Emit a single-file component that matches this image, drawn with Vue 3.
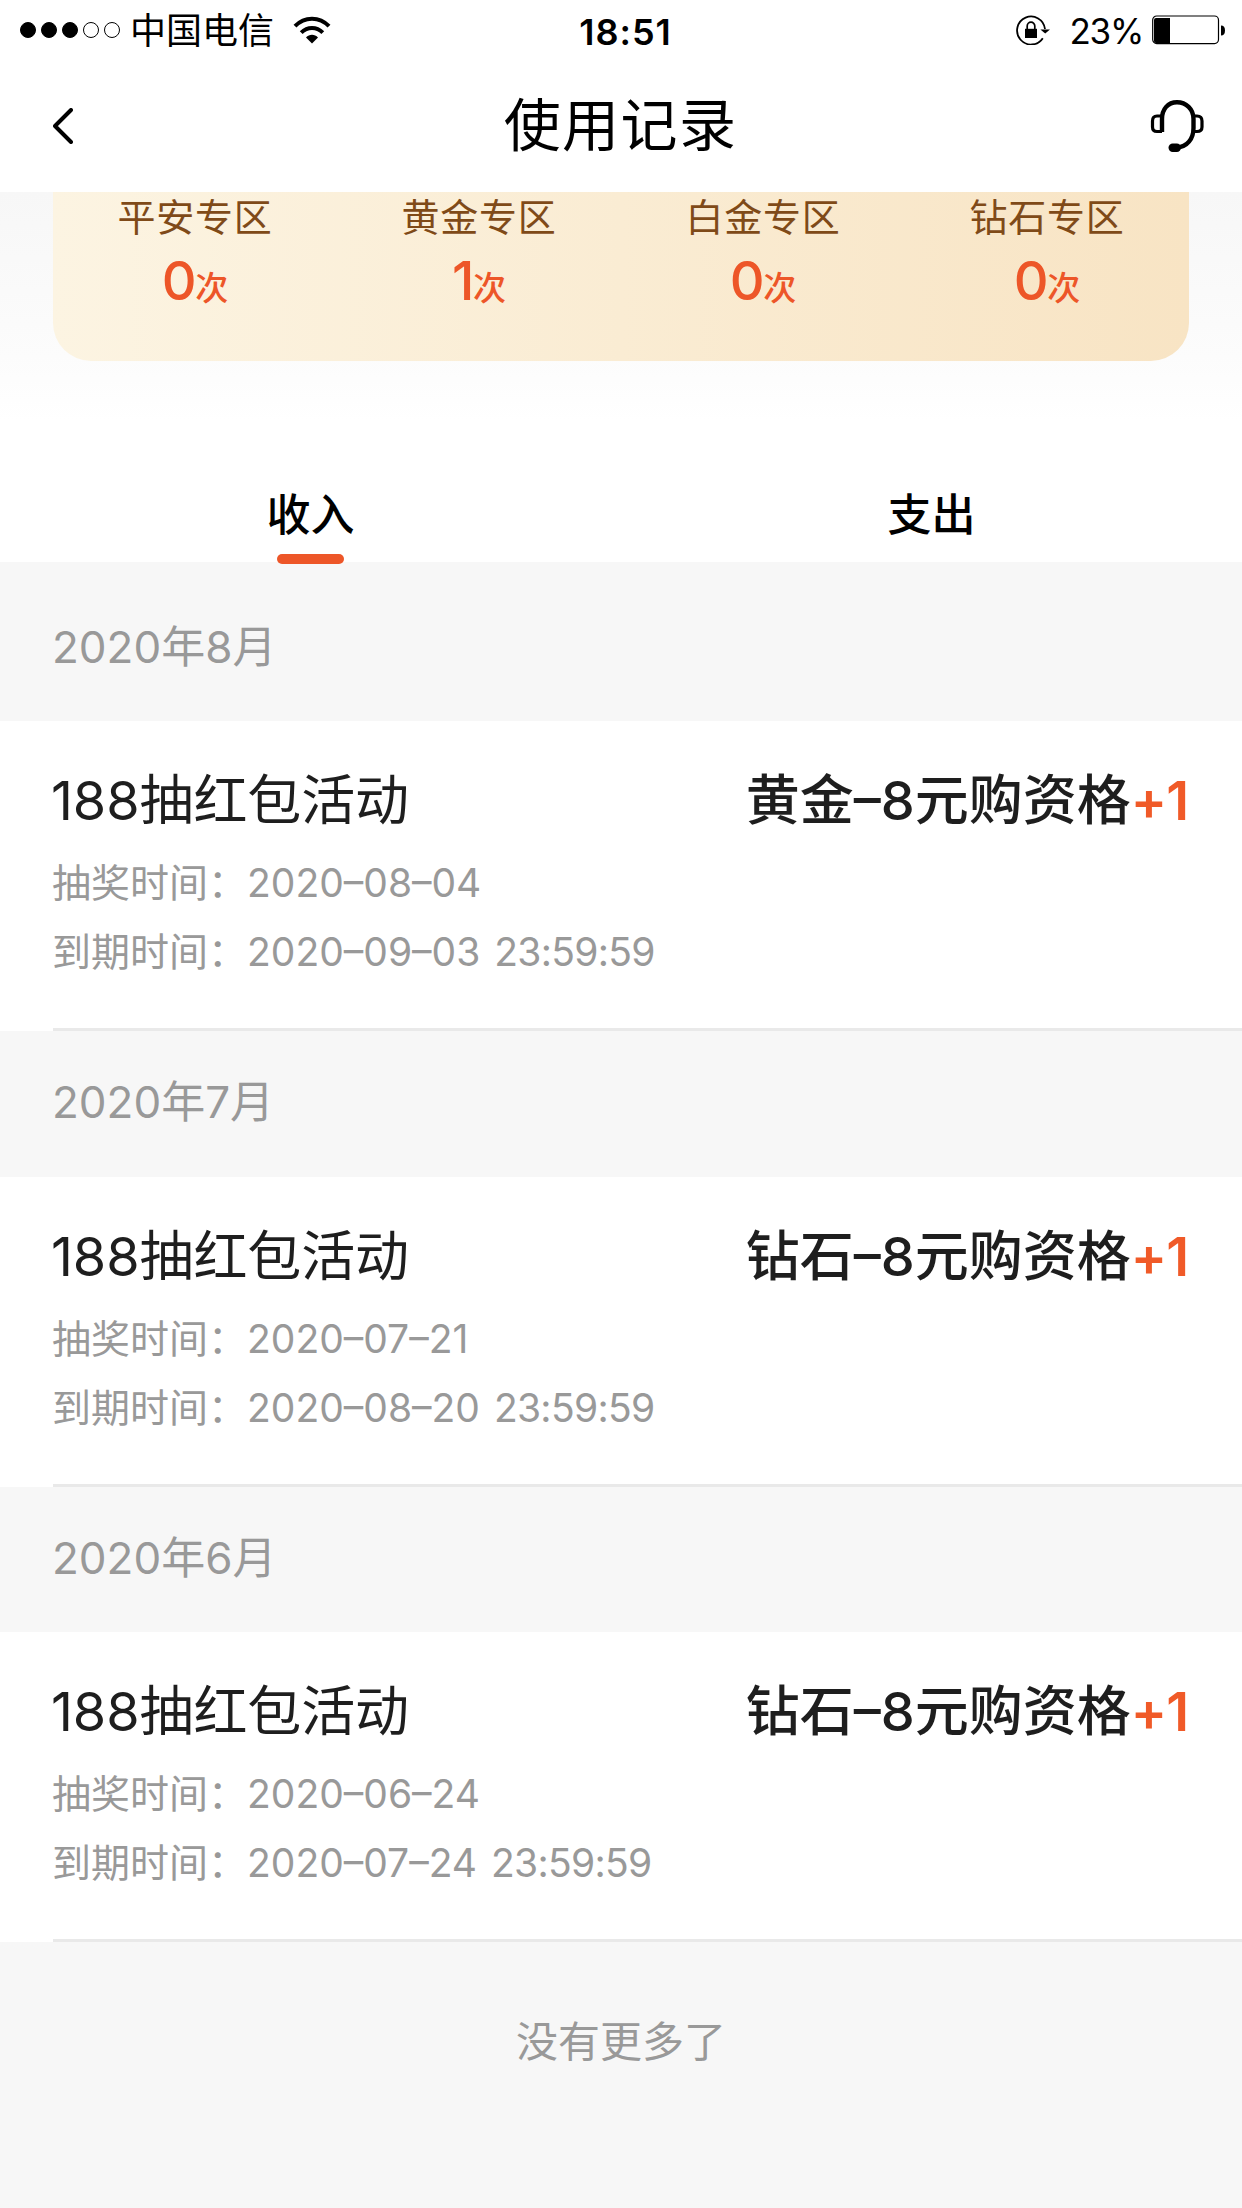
<template>
  <div class="page">
    <div class="status-bar">
      <div class="status-left">
        <span v-for="n in 5" :key="n" class="dot" :class="{ filled: n <= 3 }"></span>
        <span class="carrier">中国电信</span>
        <svg class="wifi" viewBox="0 0 38 28">
          <path d="M2 10.2C11.5 0.2 26.5 0.2 36 10.2" fill="none" stroke="#000" stroke-width="4" />
          <path d="M8.2 16.6C14.5 10.4 23.5 10.4 29.8 16.6" fill="none" stroke="#000" stroke-width="4" />
          <path d="M19 27.5L13 21.4C16.3 18 21.7 18 25 21.4Z" />
        </svg>
      </div>
      <span class="time">18:51</span>
      <div class="status-right">
        <svg class="lock" viewBox="0 0 34 30">
          <path d="M26.8 23.2A14 14 0 1 1 29 14" fill="none" stroke="#000" stroke-width="1.8" />
          <path d="M24.4 14.4H34L29.2 18.6Z" />
          <path d="M9 13.8H21V23H9Z" />
          <path d="M11.2 14V11A3.8 3.8 0 0 1 18.8 11V14" fill="none" stroke="#000" stroke-width="1.7" />
        </svg>
        <span class="percent">23%</span>
        <svg class="battery" viewBox="0 0 74 30">
          <rect x="0.7" y="1" width="65.8" height="27.6" rx="4" fill="none" stroke="#000" stroke-width="1.2" />
          <path d="M4 3H18V28H4Q2 28 2 26V5Q2 3 4 3Z" />
          <path d="M69 10.5Q73 10.5 73 15.5Q73 20.5 69 20.5Z" />
        </svg>
      </div>
    </div>

    <header class="nav">
      <svg class="back" viewBox="0 0 20 36">
        <path d="M18 2L2 18L18 34" fill="none" stroke="#000" stroke-width="4" stroke-linecap="round" stroke-linejoin="round" />
      </svg>
      <h1>使用记录</h1>
      <svg class="service" viewBox="0 0 54 54">
        <g fill="none" stroke="#000">
          <path d="M12 33V20C12 10 18 3.2 27 3.2C36 3.2 43.5 10 43.5 20V29C43.5 40 37 48 27 48.5H23" stroke-width="4.4" />
          <path d="M12 17H7Q2.5 17 2.5 22V28Q2.5 32.5 7 32.5H12" stroke-width="3.2" />
          <path d="M43 17H47Q52 17 52 22V28Q52 32.5 47 32.5H43" stroke-width="3.2" />
        </g>
        <rect x="18.5" y="44.5" width="12.5" height="8.5" rx="4.2" />
      </svg>
    </header>

    <section class="summary">
      <div class="card">
        <div v-for="zone in zones" :key="zone.name" class="zone">
          <div class="zone-name">{{ zone.name }}</div>
          <div class="zone-count"><b>{{ zone.count }}</b>次</div>
        </div>
      </div>
    </section>

    <div class="tabs">
      <div
        v-for="tab in tabs"
        :key="tab"
        class="tab"
        :class="{ active: tab === activeTab }"
        @click="activeTab = tab"
      >
        <span>{{ tab }}</span>
      </div>
    </div>

    <main class="list">
      <section v-for="record in records" :key="record.month">
        <h2 class="month">{{ record.month }}</h2>
        <div class="item">
          <div class="item-head">
            <span class="item-title">188抽红包活动</span>
            <span class="reward">{{ record.reward }}<em>+1</em></span>
          </div>
          <p>抽奖时间：{{ record.drawDate }}</p>
          <p>到期时间：{{ record.expireDate }} <span class="clock">23:59:59</span></p>
        </div>
      </section>
      <div class="no-more">没有更多了</div>
    </main>
  </div>
</template>

<script setup>
import { ref } from 'vue'

const zones = [
  { name: '平安专区', count: 0 },
  { name: '黄金专区', count: 1 },
  { name: '白金专区', count: 0 },
  { name: '钻石专区', count: 0 }
]

const tabs = ['收入', '支出']
const activeTab = ref('收入')

const records = [
  {
    month: '2020年8月',
    reward: '黄金–8元购资格',
    drawDate: '2020–08–04',
    expireDate: '2020–09–03'
  },
  {
    month: '2020年7月',
    reward: '钻石–8元购资格',
    drawDate: '2020–07–21',
    expireDate: '2020–08–20'
  },
  {
    month: '2020年6月',
    reward: '钻石–8元购资格',
    drawDate: '2020–06–24',
    expireDate: '2020–07–24'
  }
]
</script>

<style>
body {
  margin: 0;
  background: #f7f7f7;
}
</style>

<style scoped>
.page {
  height: 2208px;
  overflow: hidden;
  background: #f7f7f7;
  color: #000;
  font-family: Inter, 'Noto Sans CJK SC', sans-serif;
}

.status-bar {
  height: 60px;
  display: grid;
  grid-template-columns: 1fr auto 1fr;
  align-items: center;
  padding: 0 16px 0 20px;
  background: #fff;
}

.status-left,
.status-right {
  display: flex;
  align-items: center;
}

.status-right {
  justify-content: flex-end;
}

.dot {
  width: 16px;
  height: 16px;
  box-sizing: border-box;
  margin-right: 5px;
  border: 1px solid #000;
  border-radius: 50%;
}

.dot.filled {
  background: #000;
}

.carrier {
  margin-left: 5px;
  padding-top: 3px;
  font-size: 36px;
  line-height: 57px;
}

.wifi {
  width: 38px;
  height: 28px;
  margin-left: 19px;
}

.time {
  padding: 3px 0 0 5px;
  font-size: 36px;
  font-weight: 600;
  letter-spacing: 1px;
}

.lock {
  width: 34px;
  height: 30px;
}

.percent {
  margin: 0 9px 0 20px;
  padding-top: 2px;
  font-size: 35px;
  letter-spacing: -1.3px;
}

.battery {
  width: 74px;
  height: 30px;
}

.nav {
  height: 132px;
  box-sizing: border-box;
  display: flex;
  align-items: center;
  justify-content: space-between;
  padding: 0 38px 0 53px;
  background: #fff;
}

.back {
  width: 20px;
  height: 36px;
  margin-right: 18px;
}

.nav h1 {
  margin: 0;
  font-size: 57px;
  font-weight: 400;
  line-height: 130px;
  letter-spacing: 1.4px;
}

.service {
  width: 54px;
  height: 54px;
}

.summary {
  height: 273px;
  box-sizing: border-box;
  display: flex;
  align-items: flex-end;
  padding: 0 53px 104px;
  overflow: hidden;
  background: linear-gradient(#f7f7f7, #fcfcfc 165px, #fff 230px);
}

.card {
  flex: 1;
  height: 420px;
  box-sizing: border-box;
  display: flex;
  align-items: flex-end;
  padding-bottom: 37px;
  border-radius: 38px;
  background: linear-gradient(90deg, #fcf4e2, #f8e4c4);
}

.zone {
  flex: 1;
  text-align: center;
}

.zone-name {
  color: #7f4a18;
  font-size: 38px;
  line-height: 56px;
  letter-spacing: 0.8px;
}

.zone-count {
  color: #ed5628;
  font-size: 33px;
  font-weight: 500;
  line-height: 72px;
}

.zone-count b {
  font-size: 54px;
  font-weight: 500;
  letter-spacing: -1.5px;
}

.tabs {
  height: 97px;
  display: flex;
  background: #fff;
}

.tab {
  flex: 1;
  display: flex;
  flex-direction: column;
  align-items: center;
  font-size: 44px;
  font-weight: 500;
  line-height: 101px;
}

.tab.active::after {
  content: '';
  width: 67px;
  height: 10px;
  flex: none;
  margin-top: -12px;
  border-radius: 5px;
  background: #ed5628;
  position: relative;
}

.month {
  margin: 0;
  padding: 0 0 3px 52px;
  color: #999;
  font-size: 44px;
  font-weight: 400;
  line-height: 142.2px;
}

.list section:first-child .month {
  padding-top: 13.8px;
}

.item {
  height: 310.3px;
  box-sizing: border-box;
  padding: 42px 53px 0;
  background: linear-gradient(#e9e9e9, #e9e9e9) 53px 100% / 100% 3px no-repeat #fff;
}

.item-head {
  display: flex;
  justify-content: space-between;
  color: #1e1e1e;
  font-size: 54px;
  line-height: 76px;
}

.item-title {
  margin-left: -2px;
  letter-spacing: -0.1px;
}

.reward {
  margin-right: 1px;
  font-weight: 500;
}

.reward em {
  color: #f05a28;
  font-style: normal;
  font-weight: 600;
  letter-spacing: -1px;
}

.item p {
  margin: 0 0 0 -1px;
  color: #999;
  font-size: 39px;
  line-height: 69px;
}

.item .item-head + p {
  margin-top: 9px;
}

.clock {
  margin-left: 3px;
  letter-spacing: -0.7px;
}

.no-more {
  padding-top: 70px;
  color: #999;
  font-size: 42px;
  line-height: 60px;
  text-align: center;
}
</style>
